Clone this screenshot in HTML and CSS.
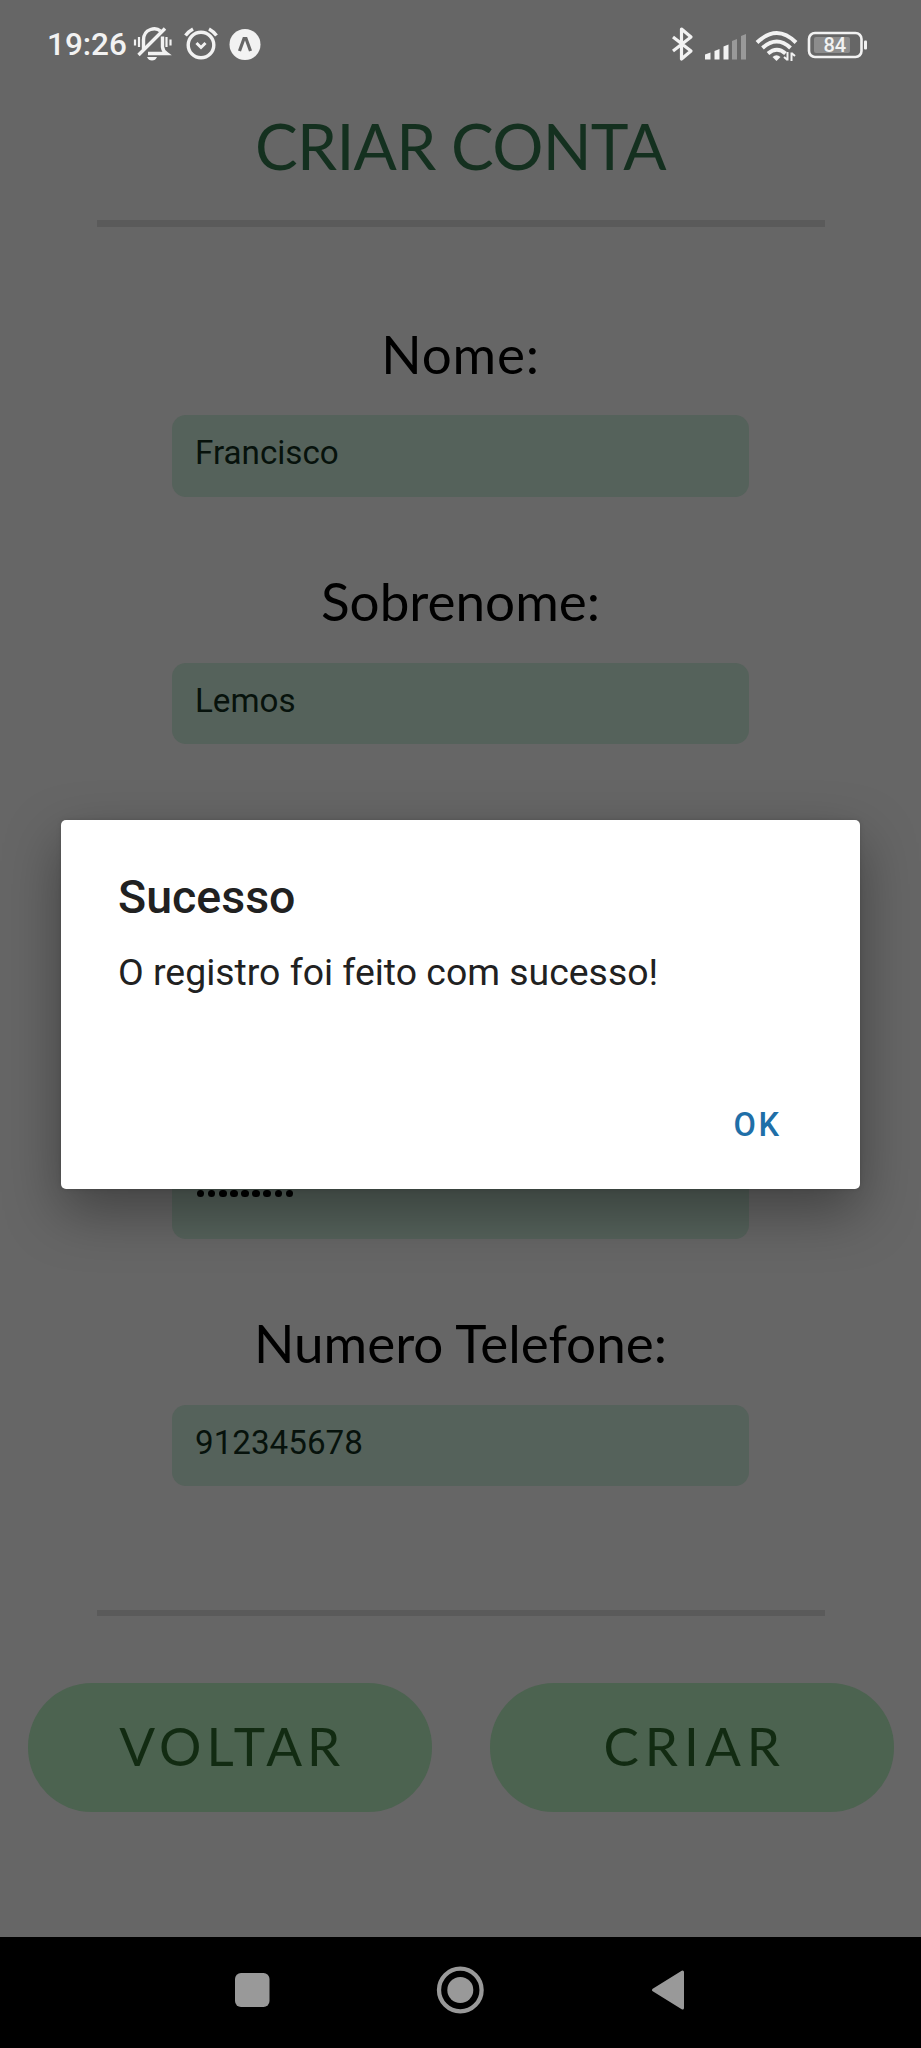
FILE: index.html
```html
<!DOCTYPE html>
<html lang="pt">
<head>
<meta charset="utf-8">
<title>Criar Conta</title>
<link rel="stylesheet" href="styles.css">
</head>
<body>
<div class="screen">
  <header class="status">
    <span class="clock">19:26</span>
    <svg class="status-left" width="130" height="40" viewBox="0 0 130 40" fill="none" stroke="#f2f2f2">
      <path d="M2 16.500v6M6 14v10M33.500 14v10M37.500 16.500v6" stroke-width="2.200"/>
      <path d="M10.500 26V17q0-8 7-10.500 6-2 10 1.500M29.500 13.500V24q.5 4 4 6.500H15" stroke-width="3.400"/>
      <path d="M5.500 32 32 5.500" stroke-width="3.400"/>
      <path d="M14 34h10q-1.500 3.500-5 3.500T14 34" fill="#f2f2f2" stroke="none"/>
      <circle cx="68" cy="22" r="12.800" stroke-width="3.400"/>
      <path d="M63.500 20 68 24.500l4.500-4.500" stroke-width="3"/>
      <path d="M52.500 12.500q3-4 7.500-6.500M83.500 12.500q-3-4-7.500-6.500" stroke-width="3.400"/>
      <circle cx="112" cy="21.500" r="15.500" fill="#f2f2f2" stroke="none"/>
      <path d="M106.500 28 111 15.500h2L117.500 28" stroke="#666" stroke-width="3.200"/>
    </svg>
    <svg class="status-right" width="204" height="40" viewBox="0 0 204 40" fill="none" stroke="#f2f2f2">
      <path d="M3 14 21 28 11.500 36V6L21 14 3 28" stroke-width="3.200" stroke-linejoin="round"/>
      <g stroke="none" fill="#f2f2f2">
        <path d="M35 31.500l5.500-2v7H35zM44.500 28l5-2v10.500h-5zM53.500 23.500l5-2v15h-5z"/>
        <path d="M62 18l5-2v20.500h-5zM71 13l5-2v25.500h-5z" fill="#999"/>
      </g>
      <path d="M87 19.500q20-19 39 0" stroke-width="4"/>
      <path d="M92.500 25q14.500-13 28 0" stroke-width="4"/>
      <path d="M98 30.500q9-7.500 17.500 0" stroke-width="4"/>
      <path d="M102.500 34q4-3.500 8 0l-4 4z" fill="#f2f2f2" stroke="none"/>
      <path d="M117.500 29v8.500M114 34l3.500 3M121.500 38v-8.500M121.500 30l3.500 3" stroke-width="2"/>
      <rect x="139" y="10" width="52.500" height="24" rx="6" stroke-width="2.600"/>
      <rect x="144" y="14" width="36" height="16" rx="2" fill="#8c8c8c" stroke="none"/>
      <rect x="194" y="17.500" width="3" height="9" rx="1" fill="#f2f2f2" stroke="none"/>
      <text class="battery" x="153.500" y="28.500">84</text>
    </svg>
  </header>

  <h1 class="title"><span>CRIAR CONTA</span></h1>
  <div class="rule"></div>

  <form class="form">
    <div class="row"><span class="label nome">Nome:</span><div class="field">Francisco</div></div>
    <div class="row"><span class="label">Sobrenome:</span><div class="field">Lemos</div></div>
    <div class="row"><div class="field empty"></div></div>
    <div class="row"><div class="field secret"><i></i><i></i><i></i><i></i><i></i><i></i><i></i><i></i><i></i></div></div>
    <div class="row"><span class="label">Numero Telefone:</span><div class="field">912345678</div></div>
  </form>

  <div class="rule thin"></div>
  <div class="actions">
    <div class="button voltar"><span>VOLTAR</span></div>
    <div class="button criar"><span>CRIAR</span></div>
  </div>

  <nav class="nav">
    <svg width="921" height="111" viewBox="0 0 921 111" fill="#999">
      <rect x="235" y="36" width="34.500" height="34" rx="6"/>
      <circle cx="460.300" cy="53" r="21.300" fill="none" stroke="#999" stroke-width="4.300"/>
      <circle cx="460.300" cy="53" r="13"/>
      <path d="M653.500 53 682.500 35v36z" stroke="#999" stroke-width="3" stroke-linejoin="round"/>
    </svg>
  </nav>

  <section class="dialog">
    <h2 class="dialog-title">Sucesso</h2>
    <p class="dialog-text">O registro foi feito com sucesso!</p>
    <span class="dialog-ok">OK</span>
  </section>
</div>
</body>
</html>
```
FILE: styles.css
```css
* { box-sizing: border-box; }
body { margin: 0; background: #666; }
.screen {
  position: relative;
  display: flex;
  flex-direction: column;
  width: 921px;
  height: 2048px;
  overflow: hidden;
  background: #666;
  font-family: Roboto, sans-serif;
}
.status {
  display: flex;
  height: 106px;
  padding: 22px 47px 0 47px;
  color: #f2f2f2;
}
.clock { width: 85.500px; font-size: 31.500px; font-weight: 500; line-height: 46px; white-space: nowrap; }
.status-left, .status-right { flex: none; margin-top: 1px; }
.status-right { margin-left: auto; }
.battery { font: 500 20px Roboto, sans-serif; fill: #f2f2f2; stroke: none; }
.title {
  height: 114px;
  margin: 0;
  color: #14301f;
  font: 400 64px/80px Lato, sans-serif;
  letter-spacing: -.75px;
  text-align: center;
  white-space: nowrap;
}
.rule { flex: none; width: 728px; height: 7px; margin: 0 auto; background: #5a5a5a; }
.thin { height: 6px; }
.form {
  display: grid;
  grid-template-rows: repeat(5, 247.400px);
  height: 1382.500px;
  padding-top: 91.500px;
  justify-content: center;
}
.row { display: flex; flex-direction: column; width: 577px; height: 178.300px; justify-content: space-between; }
.label { color: #000; font: 400 53px/70px Lato, sans-serif; text-align: center; white-space: nowrap; }
.nome { letter-spacing: .8px; }
.field {
  height: 81.500px;
  padding-left: 23px;
  border-radius: 14px;
  background: #55625b;
  color: #07120c;
  font-size: 33.200px;
  line-height: 75.800px;
}
.empty, .secret { margin-top: auto; }
.secret { display: flex; gap: 3.700px; padding: 32.500px 0 0 25px; }
.secret i { width: 7.400px; height: 7.400px; border-radius: 50%; background: #000; }
.actions { display: flex; justify-content: space-between; height: 321px; padding: 67px 27.500px 0 28px; }
.button {
  width: 403.500px;
  height: 129px;
  border-radius: 64px;
  background: #4c6350;
  color: #122b12;
  font: 400 53px/126px Lato, sans-serif;
  text-align: center;
}
.voltar { padding-left: 5px; letter-spacing: 5px; }
.criar { padding-left: 6px; letter-spacing: 6px; }
.nav { flex: none; height: 111px; background: #000; }
.nav svg { display: block; }
.dialog {
  position: absolute;
  left: 61px;
  top: 820px;
  display: flex;
  flex-direction: column;
  width: 798.500px;
  height: 368.500px;
  padding: 49px 78px 0 57px;
  border-radius: 5px;
  background: #fff;
  color: #212121;
  box-shadow: 0 22px 56px rgba(0, 0, 0, .36), 0 0 5px rgba(0, 0, 0, .12);
}
.dialog-title { margin: 0; font-size: 46.500px; font-weight: 500; line-height: 56px; }
.dialog-text { margin: 19px 0 0; font-size: 37.400px; line-height: 56px; white-space: nowrap; }
.dialog-ok { align-self: flex-end; margin-top: 99.500px; color: #1f6fa8; font-size: 32.500px; font-weight: 500; line-height: 50px; letter-spacing: 2.500px; }
```
